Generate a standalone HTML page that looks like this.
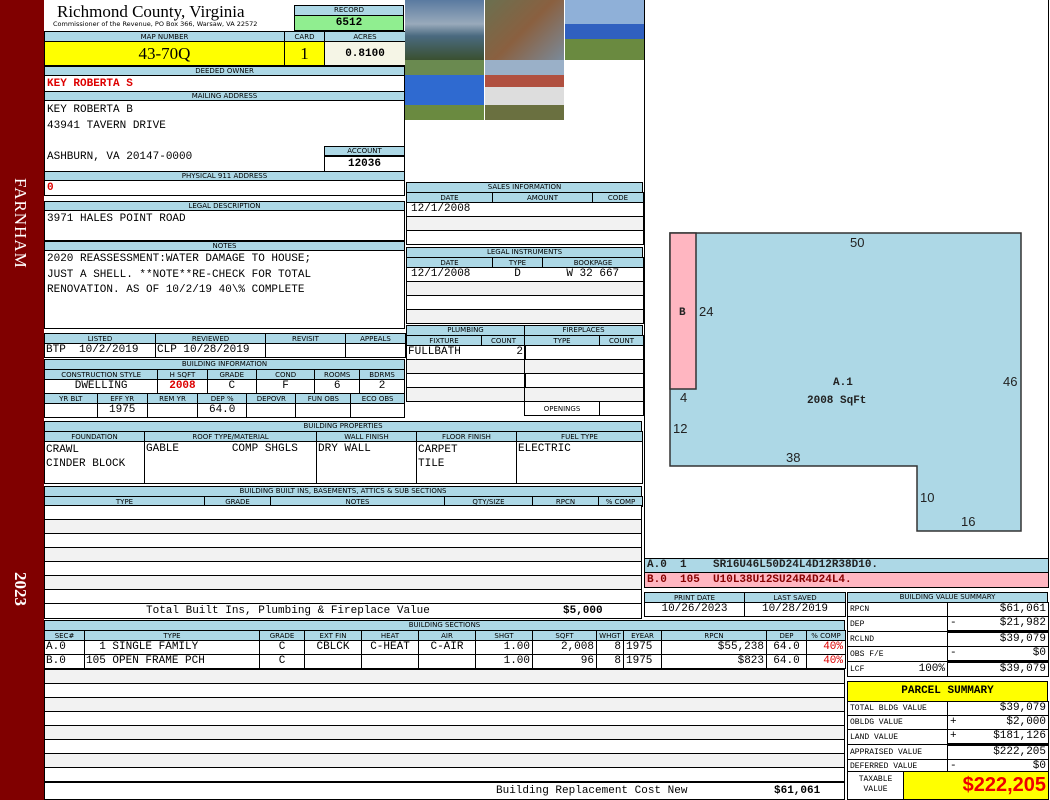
<!DOCTYPE html>
<html><head><meta charset="utf-8"><style>
*{margin:0;padding:0;box-sizing:border-box}
body{width:1050px;height:800px;background:#fff;position:relative;overflow:hidden;font-family:"Liberation Mono",monospace}
.a{position:absolute}
table{border-collapse:collapse;table-layout:fixed;position:absolute}
td{border:1px solid #000;overflow:hidden;white-space:pre;padding:0 2px}
.m td{font:11px "Liberation Mono",monospace;height:14px;line-height:13px}
table tr.h td,table td.h{background:#add8e6;font:7px/8px "DejaVu Sans",sans-serif;text-align:center;padding:0;height:10px}
.g td{background:#f2f2f2}
.c{text-align:center}.r{text-align:right}
.hd{position:absolute;background:#add8e6;border:1px solid #000;font:7px/8px "DejaVu Sans",sans-serif;text-align:center}
.bx{position:absolute;border:1px solid #000;background:#fff}
.t{position:absolute;font:11px/13px "Liberation Mono",monospace;white-space:pre}
.red,.m td.red{color:#d00;font-weight:bold}
</style></head><body>
<div class="a" style="left:0;top:0;width:44px;height:800px;background:#800000"></div>
<div class="a" style="left:10px;top:178px;color:#fff;font:17px 'Liberation Serif',serif;writing-mode:vertical-rl;letter-spacing:1px">FARNHAM</div>
<div class="a" style="left:10px;top:572px;color:#fff;font:bold 17px 'Liberation Serif',serif;writing-mode:vertical-rl">2023</div>

<div class="a" style="left:57px;top:2px;font:17px/19px 'Liberation Serif',serif">Richmond County, Virginia</div>
<div class="a" style="left:53px;top:20px;font:6.5px/8px 'DejaVu Sans',sans-serif">Commissioner of the Revenue, PO Box 366, Warsaw, VA 22572</div>
<div class="hd" style="left:294px;top:5px;width:110px;height:11px">RECORD</div>
<div class="a" style="left:294px;top:15px;width:110px;height:16px;background:#90ee90;border:1px solid #000;text-align:center;font:bold 11px/14px 'Liberation Mono',monospace">6512</div>

<table style="left:44px;top:31px;width:361px">
<colgroup><col style="width:240px"><col style="width:40px"><col style="width:81px"></colgroup>
<tr class="h"><td>MAP NUMBER</td><td>CARD</td><td>ACRES</td></tr>
<tr><td class="c" style="background:#ff0;font:17px/23px 'Liberation Serif',serif">43-70Q</td><td class="c" style="background:#ff0;font:17px/23px 'Liberation Serif',serif">1</td><td class="c" style="background:#f5f5e6;font:bold 11px 'Liberation Mono',monospace">0.8100</td></tr>
</table>
<div class="hd" style="left:44px;top:66px;width:361px;height:10px">DEEDED OWNER</div>
<div class="bx" style="left:44px;top:75px;width:361px;height:17px"></div>
<div class="t red" style="left:47px;top:78px">KEY ROBERTA S</div>
<div class="hd" style="left:44px;top:91px;width:361px;height:10px">MAILING ADDRESS</div>
<div class="bx" style="left:44px;top:100px;width:361px;height:72px"></div>
<div class="t" style="left:47px;top:103px;line-height:15.5px">KEY ROBERTA B
43941 TAVERN DRIVE

ASHBURN, VA 20147-0000</div>
<div class="hd" style="left:324px;top:146px;width:81px;height:10px">ACCOUNT</div>
<div class="t" style="left:324px;top:156px;width:81px;border:1px solid #000;text-align:center;font-weight:bold;height:16px;line-height:14px">12036</div>
<div class="hd" style="left:44px;top:171px;width:361px;height:10px">PHYSICAL 911 ADDRESS</div>
<div class="bx" style="left:44px;top:180px;width:361px;height:16px"></div>
<div class="t red" style="left:47px;top:182px">0</div>

<div class="hd" style="left:44px;top:201px;width:361px;height:10px">LEGAL DESCRIPTION</div>
<div class="bx" style="left:44px;top:210px;width:361px;height:31px"></div>
<div class="t" style="left:47px;top:213px">3971 HALES POINT ROAD</div>
<div class="hd" style="left:44px;top:241px;width:361px;height:10px">NOTES</div>
<div class="bx" style="left:44px;top:250px;width:361px;height:79px"></div>
<div class="t" style="left:47px;top:252px;line-height:15.5px">2020 REASSESSMENT:WATER DAMAGE TO HOUSE;
JUST A SHELL. **NOTE**RE-CHECK FOR TOTAL
RENOVATION. AS OF 10/2/19 40\% COMPLETE</div>

<table class="m" style="left:44px;top:333px;width:361px">
<colgroup><col style="width:111px"><col style="width:110px"><col style="width:80px"><col style="width:60px"></colgroup>
<tr class="h"><td>LISTED</td><td>REVIEWED</td><td>REVISIT</td><td>APPEALS</td></tr>
<tr><td style="padding:0 1px">BTP  10/2/2019</td><td style="padding:0 1px">CLP 10/28/2019</td><td></td><td></td></tr>
</table>
<div class="hd" style="left:44px;top:359px;width:361px;height:11px">BUILDING INFORMATION</div>
<table class="m" style="left:44px;top:369px;width:361px">
<colgroup><col style="width:101px"><col style="width:44px"><col style="width:44px"><col style="width:52px"><col style="width:40px"><col style="width:40px"></colgroup>
<tr class="h"><td>CONSTRUCTION STYLE</td><td>H SQFT</td><td>GRADE</td><td>COND</td><td>ROOMS</td><td>BDRMS</td></tr>
<tr><td class="c">DWELLING</td><td class="c red">2008</td><td class="c">C</td><td class="c">F</td><td class="c">6</td><td class="c">2</td></tr>
</table>
<table class="m" style="left:44px;top:393px;width:361px">
<colgroup><col style="width:46px"><col style="width:44px"><col style="width:44px"><col style="width:43px"><col style="width:43px"><col style="width:48px"><col style="width:47px"></colgroup>
<tr class="h"><td>YR BLT</td><td>EFF YR</td><td>REM YR</td><td>DEP %</td><td>DEPOVR</td><td>FUN OBS</td><td>ECO OBS</td></tr>
<tr><td></td><td class="c">1975</td><td></td><td class="c">64.0</td><td></td><td></td><td></td></tr>
</table>

<div class="hd" style="left:44px;top:421px;width:598px;height:11px">BUILDING PROPERTIES</div>
<table class="m" style="left:44px;top:431px;width:598px">
<colgroup><col style="width:100px"><col style="width:172px"><col style="width:100px"><col style="width:100px"><col style="width:126px"></colgroup>
<tr class="h"><td>FOUNDATION</td><td>ROOF TYPE/MATERIAL</td><td>WALL FINISH</td><td>FLOOR FINISH</td><td>FUEL TYPE</td></tr>
<tr><td style="height:42px;vertical-align:top;line-height:14px;padding:1px 1px">CRAWL
CINDER BLOCK</td><td style="vertical-align:top;padding:1px 1px">GABLE        COMP SHGLS</td><td style="vertical-align:top;padding:1px 1px">DRY WALL</td><td style="vertical-align:top;line-height:14px;padding:1px 1px">CARPET
TILE</td><td style="vertical-align:top;padding:1px 1px">ELECTRIC</td></tr>
</table>

<div class="hd" style="left:44px;top:486px;width:598px;height:11px">BUILDING BUILT INS, BASEMENTS, ATTICS &amp; SUB SECTIONS</div>
<table class="m" style="left:44px;top:496px;width:598px">
<colgroup><col style="width:160px"><col style="width:66px"><col style="width:174px"><col style="width:88px"><col style="width:66px"><col style="width:44px"></colgroup>
<tr class="h"><td>TYPE</td><td>GRADE</td><td>NOTES</td><td>QTY/SIZE</td><td>RPCN</td><td>% COMP</td></tr>
</table>
<div class="bx" style="left:44px;top:505px;width:598px;height:99px;background:repeating-linear-gradient(#fff 0 13px,#000 13px 14px,#f2f2f2 14px 27px,#000 27px 28px)"></div>
<div class="bx" style="left:44px;top:603px;width:598px;height:16px"></div>
<div class="t" style="left:146px;top:605px">Total Built Ins, Plumbing &amp; Fireplace Value</div>
<div class="t" style="left:563px;top:605px;font-weight:bold">$5,000</div>

<div class="hd" style="left:44px;top:620px;width:801px;height:11px">BUILDING SECTIONS</div>
<table class="m" style="left:44px;top:630px;width:801px">
<colgroup><col style="width:40px"><col style="width:175px"><col style="width:45px"><col style="width:57px"><col style="width:57px"><col style="width:57px"><col style="width:57px"><col style="width:64px"><col style="width:27px"><col style="width:38px"><col style="width:105px"><col style="width:40px"><col style="width:39px"></colgroup>
<tr class="h"><td>SEC#</td><td>TYPE</td><td>GRADE</td><td>EXT FIN</td><td>HEAT</td><td>AIR</td><td>SHGT</td><td>SQFT</td><td>WHGT</td><td>EYEAR</td><td>RPCN</td><td>DEP</td><td>% COMP</td></tr>
<tr><td style="padding:0 1px">A.0</td><td style="padding:0 1px">  1 SINGLE FAMILY</td><td class="c">C</td><td class="c">CBLCK</td><td class="c">C-HEAT</td><td class="c">C-AIR</td><td class="r">1.00</td><td class="r">2,008</td><td class="r">8</td><td>1975</td><td class="r">$55,238</td><td class="c">64.0</td><td class="r" style="color:#d00">40%</td></tr>
<tr><td style="padding:0 1px">B.0</td><td style="padding:0 1px">105 OPEN FRAME PCH</td><td class="c">C</td><td></td><td></td><td></td><td class="r">1.00</td><td class="r">96</td><td class="r">8</td><td>1975</td><td class="r">$823</td><td class="c">64.0</td><td class="r" style="color:#d00">40%</td></tr>
</table>
<div class="bx" style="left:44px;top:669px;width:801px;height:114px;background:repeating-linear-gradient(#f2f2f2 0 13px,#000 13px 14px,#fff 14px 27px,#000 27px 28px)"></div>
<div class="bx" style="left:44px;top:782px;width:801px;height:18px"></div>
<div class="t" style="left:496px;top:785px">Building Replacement Cost New</div>
<div class="t" style="left:774px;top:785px;font-weight:bold">$61,061</div>

<!-- photos -->
<div class="a" style="left:405px;top:0;width:79px;height:60px;background:linear-gradient(#5a7aa0,#9ab 40%,#4a6a80 60%,#3a5030)"></div>
<div class="a" style="left:485px;top:0;width:79px;height:60px;background:linear-gradient(135deg,#6a7050,#8a6040 50%,#7a8a9a)"></div>
<div class="a" style="left:565px;top:0;width:79px;height:60px;background:linear-gradient(#8fb0d8 0 40%,#3060c0 40% 65%,#6a8a40 65%)"></div>
<div class="a" style="left:405px;top:60px;width:79px;height:60px;background:linear-gradient(#6a8a50 0 25%,#2f6ad0 25% 75%,#6a8a40 75%)"></div>
<div class="a" style="left:485px;top:60px;width:79px;height:60px;background:linear-gradient(#9ab0c8 0 25%,#b05040 25% 45%,#ddd 45% 75%,#6a7040 75%)"></div>

<!-- sales -->
<div class="hd" style="left:406px;top:182px;width:237px;height:11px">SALES INFORMATION</div>
<table class="m" style="left:406px;top:192px;width:237px">
<colgroup><col style="width:86px"><col style="width:100px"><col style="width:51px"></colgroup>
<tr class="h"><td>DATE</td><td>AMOUNT</td><td>CODE</td></tr>
<tr><td colspan="3" style="padding:0 4px">12/1/2008</td></tr>
<tr class="g"><td colspan="3"></td></tr>
<tr><td colspan="3"></td></tr>
</table>
<div class="hd" style="left:406px;top:247px;width:237px;height:11px">LEGAL INSTRUMENTS</div>
<table class="m" style="left:406px;top:257px;width:237px">
<colgroup><col style="width:86px"><col style="width:50px"><col style="width:101px"></colgroup>
<tr class="h"><td>DATE</td><td>TYPE</td><td>BOOKPAGE</td></tr>
<tr><td style="border-right:0;padding:0 4px">12/1/2008</td><td class="c" style="border:0;border-bottom:1px solid #000">D</td><td class="c" style="border-left:0">W 32 667</td></tr>
<tr class="g"><td colspan="3"></td></tr>
<tr><td colspan="3"></td></tr>
<tr class="g"><td colspan="3"></td></tr>
</table>
<div class="hd" style="left:406px;top:325px;width:119px;height:11px">PLUMBING</div>
<div class="hd" style="left:524px;top:325px;width:119px;height:11px">FIREPLACES</div>
<table class="m" style="left:406px;top:335px;width:119px">
<colgroup><col style="width:75px"><col style="width:44px"></colgroup>
<tr class="h"><td>FIXTURE</td><td>COUNT</td></tr>
<tr><td style="border-right:0;padding:0 1px">FULLBATH</td><td class="r" style="border-left:0">2</td></tr>
<tr class="g"><td colspan="2"></td></tr><tr><td colspan="2"></td></tr><tr class="g"><td colspan="2"></td></tr>
</table>
<table class="m" style="left:524px;top:335px;width:119px">
<colgroup><col style="width:75px"><col style="width:44px"></colgroup>
<tr class="h"><td>TYPE</td><td>COUNT</td></tr>
<tr><td colspan="2"></td></tr><tr class="g"><td colspan="2"></td></tr><tr><td colspan="2"></td></tr><tr class="g"><td colspan="2"></td></tr>
<tr><td style="font:7px 'DejaVu Sans',sans-serif;text-align:center">OPENINGS</td><td></td></tr>
</table>

<!-- sketch -->
<div class="bx" style="left:644px;top:0;width:405px;height:559px;border-top:0"></div>
<svg class="a" style="left:0;top:0" width="1050" height="560">
<polygon points="670,233 1021,233 1021,531 917,531 917,466 670,466" fill="#add8e6" stroke="#333" stroke-width="1.5"/>
<rect x="670" y="233" width="26" height="156" fill="#ffb6c1" stroke="#333" stroke-width="1.5"/>
<g font-family="Liberation Sans,sans-serif" font-size="13" fill="#222">
<text x="850" y="247">50</text><text x="699" y="316">24</text><text x="1003" y="386">46</text>
<text x="680" y="402">4</text><text x="673" y="433">12</text><text x="786" y="462">38</text>
<text x="920" y="502">10</text><text x="961" y="526">16</text></g>
<g font-family="Liberation Mono,monospace" font-size="11" font-weight="bold" fill="#222">
<text x="679" y="315">B</text><text x="833" y="385">A.1</text><text x="807" y="403">2008 SqFt</text></g>
</svg>
<div class="a" style="left:644px;top:558px;width:405px;height:15px;background:#add8e6;border:1px solid #000"></div>
<div class="a" style="left:644px;top:572px;width:405px;height:16px;background:#ffb6c1;border:1px solid #000"></div>
<div class="t" style="left:647px;top:559px;color:#222;font-weight:bold">A.0  1    SR16U46L50D24L4D12R38D10.</div>
<div class="t" style="left:647px;top:574px;color:#800;font-weight:bold">B.0  105  U10L38U12SU24R4D24L4.</div>

<table class="m" style="left:644px;top:592px;width:201px">
<colgroup><col style="width:100px"><col style="width:101px"></colgroup>
<tr class="h"><td>PRINT DATE</td><td>LAST SAVED</td></tr>
<tr><td class="c">10/26/2023</td><td class="c">10/28/2019</td></tr>
</table>

<div class="hd" style="left:847px;top:592px;width:201px;height:11px">BUILDING VALUE SUMMARY</div>
<table class="m" style="left:847px;top:602px;width:201px">
<colgroup><col style="width:100px"><col style="width:101px"></colgroup>
<tr><td style="font-size:8px">RPCN</td><td class="r">$61,061</td></tr>
<tr><td style="font-size:8px">DEP</td><td class="r" style="border-bottom:3px solid #000"><span style="float:left">-</span>$21,982</td></tr>
<tr><td style="font-size:8px">RCLND</td><td class="r">$39,079</td></tr>
<tr><td style="font-size:8px">OBS F/E</td><td class="r" style="border-bottom:3px solid #000"><span style="float:left">-</span>$0</td></tr>
<tr><td style="font-size:8px">LCF<span style="float:right;font-size:11px">100%</span></td><td class="r">$39,079</td></tr>
</table>

<div class="a" style="left:847px;top:681px;width:201px;height:21px;background:#ff0;border:1px solid #000;text-align:center;font:bold 11px/19px 'Liberation Mono',monospace">PARCEL SUMMARY</div>
<table class="m" style="left:847px;top:701px;width:201px">
<colgroup><col style="width:100px"><col style="width:101px"></colgroup>
<tr><td style="font-size:8px">TOTAL BLDG VALUE</td><td class="r">$39,079</td></tr>
<tr><td style="font-size:8px">OBLDG VALUE</td><td class="r"><span style="float:left">+</span>$2,000</td></tr>
<tr><td style="font-size:8px">LAND VALUE</td><td class="r" style="border-bottom:3px solid #000"><span style="float:left">+</span>$181,126</td></tr>
<tr><td style="font-size:8px">APPRAISED VALUE</td><td class="r">$222,205</td></tr>
<tr><td style="font-size:8px">DEFERRED VALUE</td><td class="r"><span style="float:left">-</span>$0</td></tr>
</table>
<div class="bx" style="left:847px;top:771px;width:57px;height:29px;font:8px/10px 'Liberation Mono',monospace;text-align:center;padding-top:3px">TAXABLE<br>VALUE</div>
<div class="a" style="left:903px;top:771px;width:146px;height:29px;background:#ff0;border:1px solid #000;text-align:right;padding-right:2px;color:#e00;font:bold 20px/27px 'Liberation Sans',sans-serif">$222,205</div>
</body></html>
